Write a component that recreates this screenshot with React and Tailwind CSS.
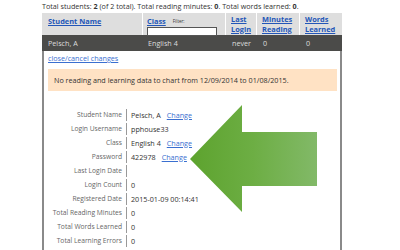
import React from "react";

const rows = [
  ["Student Name", "Pelsch, A", true],
  ["Login Username", "pphouse33", false],
  ["Class", "English 4", true],
  ["Password", "422978", true],
  ["Last Login Date", "", false],
  ["Login Count", "0", false],
  ["Registered Date", "2015-01-09 00:14:41", false],
  ["Total Reading Minutes", "0", false],
  ["Total Words Learned", "0", false],
  ["Total Learning Errors", "0", false],
];

export default function App() {
  return (
    <div
      className="relative w-[400px] h-[250px] overflow-hidden bg-white text-[#333]"
      style={{ fontFamily: '"Open Sans", "Noto Sans", sans-serif' }}
    >
      <div className="pl-[42px] pt-[1px] h-[13px] text-[7.2px] leading-[10px] text-[#333] whitespace-nowrap">
        Total students: <b>2</b> (of 2 total). Total reading minutes: <b>0</b>. Total words learned: <b>0</b>.
      </div>
      <div className="ml-[42px] w-[300px]">
        <div className="flex h-[22px] bg-[#dedede] text-[7.4px] leading-[10px]">
          <div className="w-[101px] pl-[6px] pt-[3px] border-r border-white">
            <span className="font-bold text-[#2356b8] underline whitespace-nowrap">Student Name</span>
          </div>
          <div className="w-[83px] pl-[4px] pt-[3px] border-r border-white">
            <div className="flex items-center">
              <span className="font-bold text-[#2356b8] underline">Class</span>
              <span className="ml-[7px] text-[4.5px] text-[#333]">Filter:</span>
            </div>
            <div className="mt-[1px] w-[70px] h-[9px] bg-white border border-[#555]"></div>
          </div>
          <div className="w-[31px] pl-[5px] pt-[2px] border-r border-white font-bold text-[#2356b8] underline leading-[9.5px]">
            Last<br />Login
          </div>
          <div className="w-[43px] pl-[5px] pt-[2px] border-r border-white font-bold text-[#2356b8] underline leading-[9.5px]">
            Minutes<br />Reading
          </div>
          <div className="flex-1 pl-[5px] pt-[2px] font-bold text-[#2356b8] underline leading-[9.5px]">
            Words<br />Learned
          </div>
        </div>
        <div className="flex h-[16px] items-center bg-[#4b4b49] text-[#dcdcdc] text-[7.2px]">
          <div className="w-[101px] pl-[6px]">Pelsch, A</div>
          <div className="w-[83px] pl-[5px]">English 4</div>
          <div className="w-[31px] pl-[6px]">never</div>
          <div className="w-[43px] pl-[6px]">0</div>
          <div className="flex-1 pl-[6px]">0</div>
        </div>
        <div className="h-[220px] border-l-2 border-r-2 border-[#8a8a8a] pl-[4px] pr-[3px]">
          <div className="pt-[2px] h-[18px] text-[7.2px] leading-[10px] text-[#3a6fd0] underline">
            close/cancel changes
          </div>
          <div className="h-[22px] bg-[#ffe2c4] pl-[6px] flex items-center text-[7.2px] text-[#333] whitespace-nowrap">
            No reading and learning data to chart from 12/09/2014 to 01/08/2015.
          </div>
          <div className="mt-[17px]">
            {rows.map(([label, value, change]) => (
              <div key={label} className="flex h-[14px] items-center">
                <div className="w-[78px] shrink-0 flex justify-end pr-[4px] text-[#666] text-[6.7px] whitespace-nowrap">
                  <span>{label}</span>
                </div>
                <div className="w-px h-[12px] bg-[#999] shrink-0"></div>
                <div className="pl-[4px] text-[#333] text-[7.2px] whitespace-nowrap">
                  {value}
                  {change && (
                    <span className="ml-[6px] text-[#3a6fd0] underline">Change</span>
                  )}
                </div>
              </div>
            ))}
          </div>
        </div>
      </div>
      <svg
        className="absolute left-0 top-0"
        width="400"
        height="250"
        viewBox="0 0 400 250"
      >
        <defs>
          <linearGradient id="ag" x1="190" y1="0" x2="317" y2="0" gradientUnits="userSpaceOnUse">
            <stop offset="0" stopColor="#5da32e" />
            <stop offset="0.5" stopColor="#6dae44" />
            <stop offset="1" stopColor="#82b968" />
          </linearGradient>
        </defs>
        <polygon
          points="190,159 242,105 242,132 317,132 317,186 242,186 242,212"
          fill="url(#ag)"
        />
      </svg>
    </div>
  );
}
